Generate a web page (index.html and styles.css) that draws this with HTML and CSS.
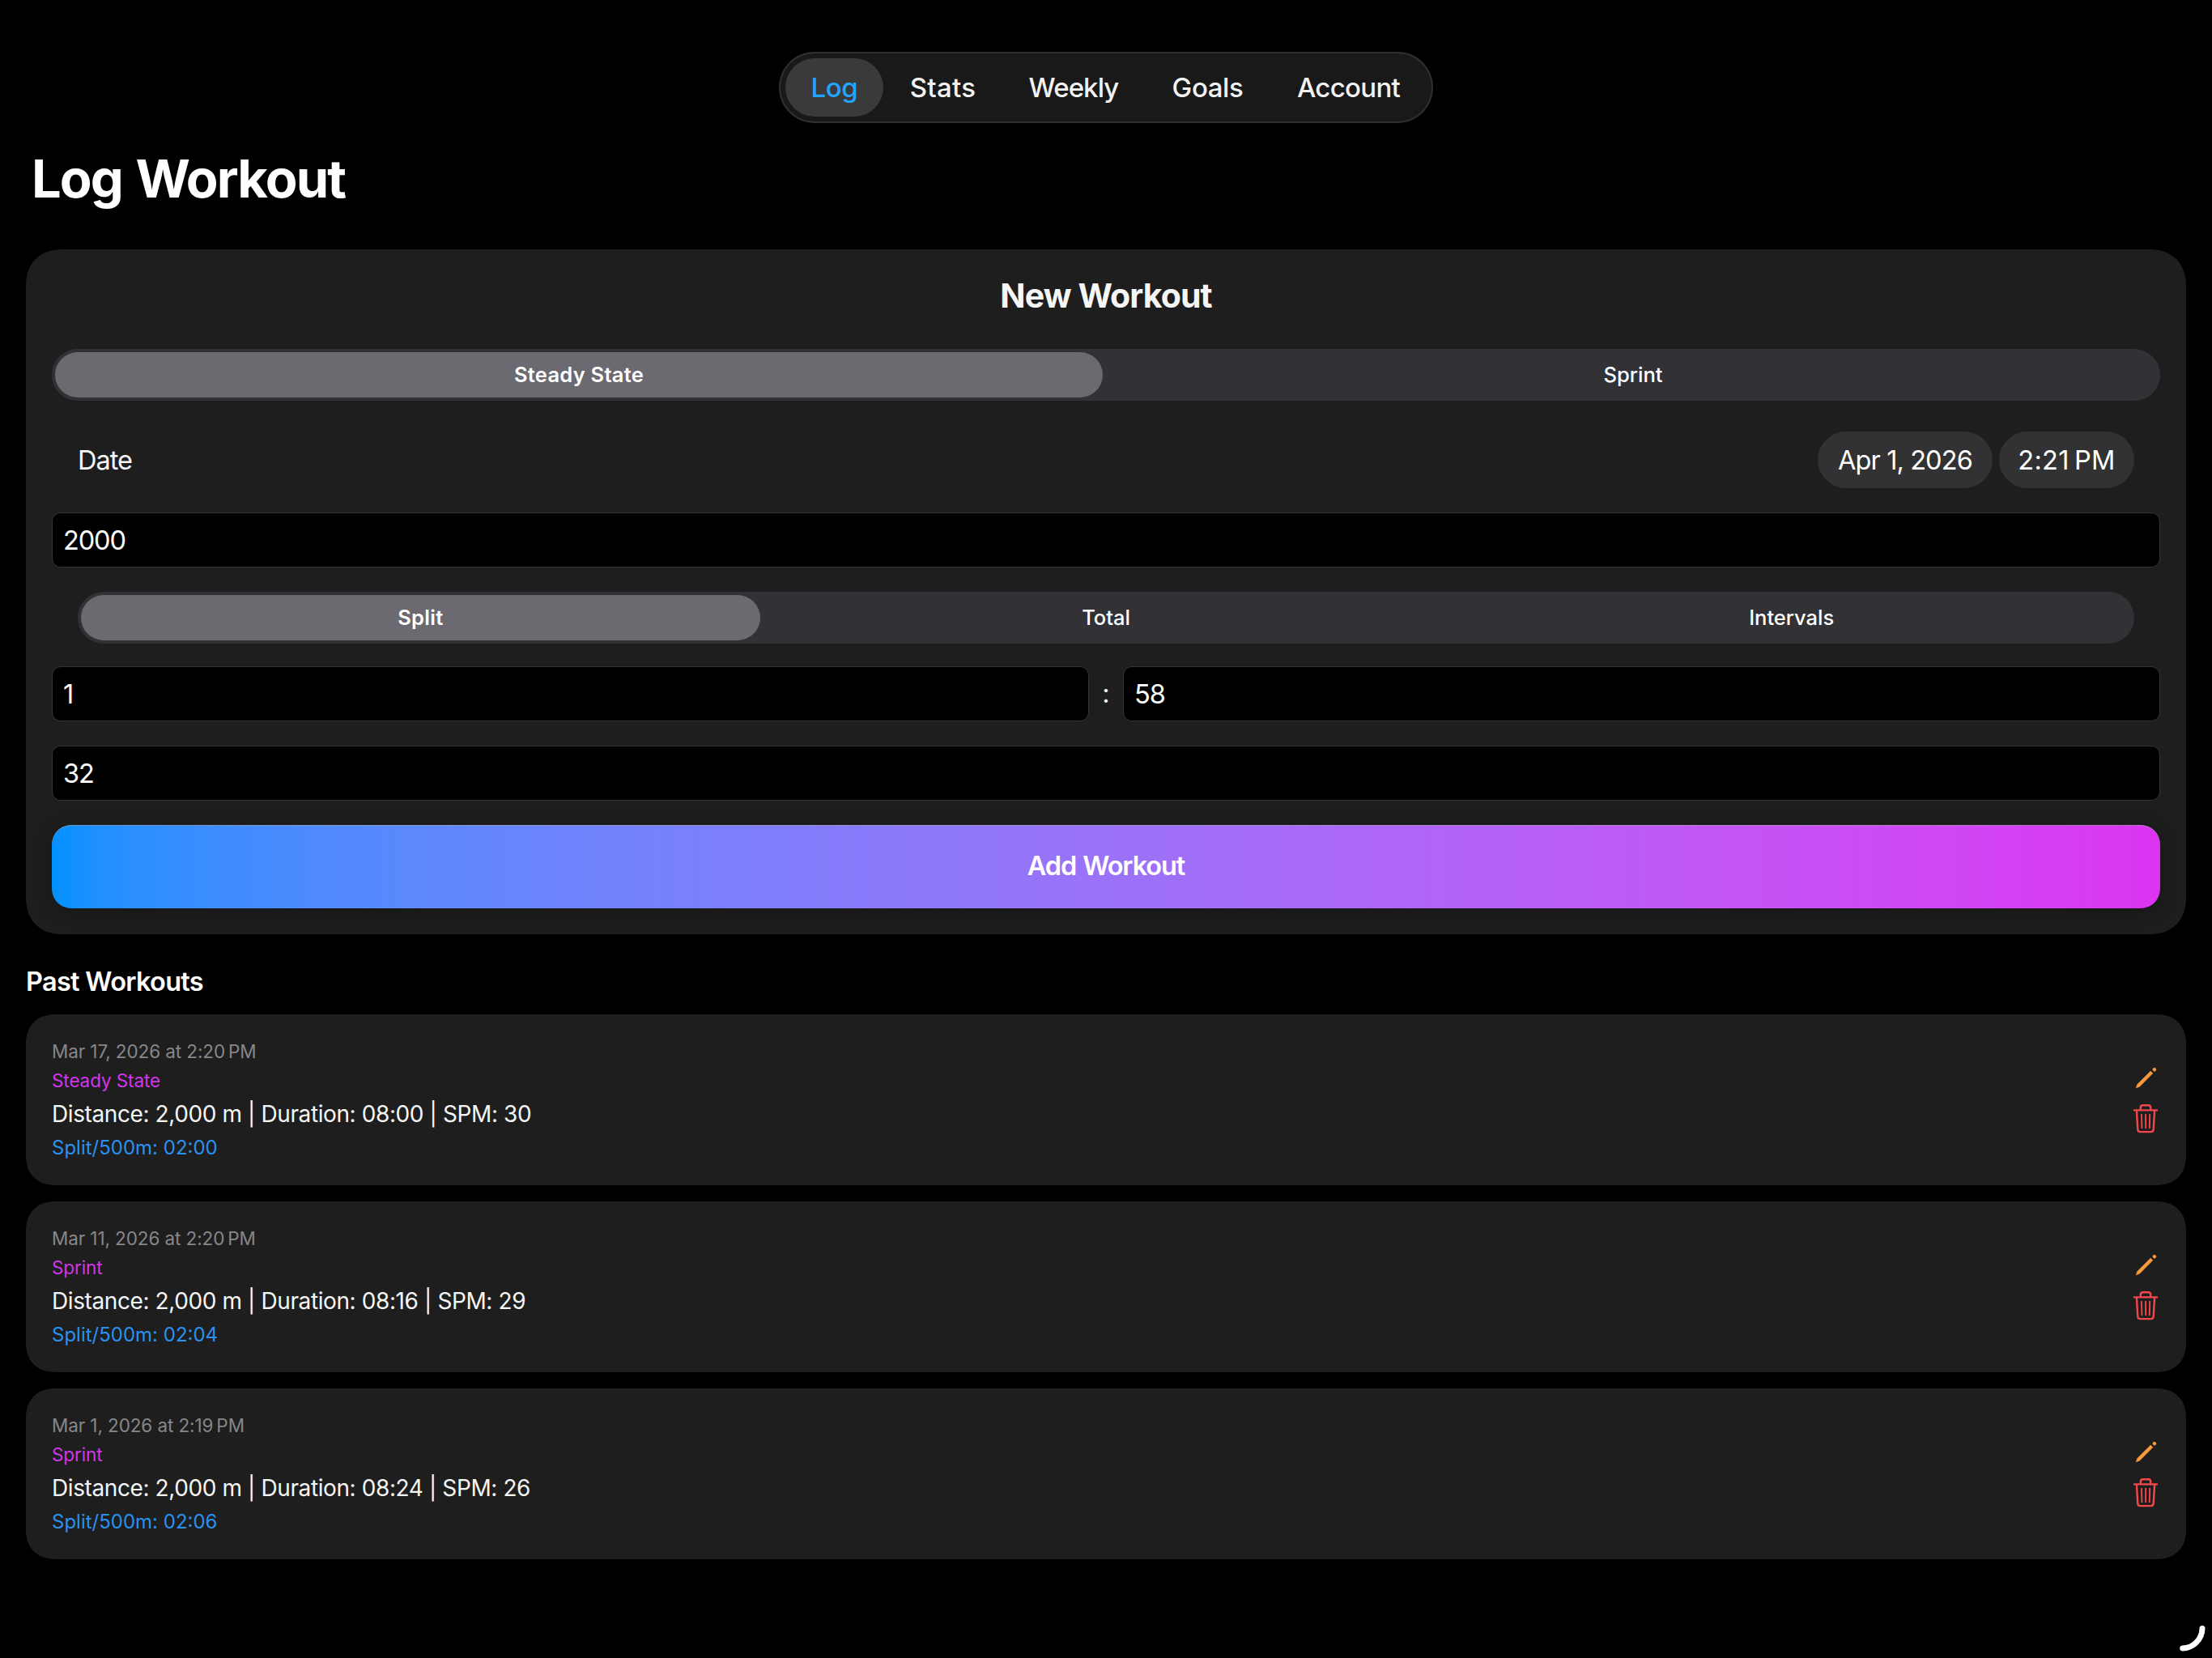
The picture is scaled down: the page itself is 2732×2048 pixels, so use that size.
FILE: index.html
```html
<!DOCTYPE html>
<html lang="en">
<head>
<meta charset="utf-8">
<title>Log Workout</title>
<link rel="stylesheet" href="styles.css">
</head>
<body>
<svg class="sprite" aria-hidden="true">
  <symbol id="pencil" viewBox="0 0 36 36">
    <path fill="currentColor" d="M6.200 30.900l1.500-4.500L24.200 10.100l2.700 2.700L10.600 29.200z" stroke="currentColor" stroke-width=".5" stroke-linejoin="round"/>
    <rect fill="currentColor" x="26.800" y="6" width="4.400" height="4.200" rx="1.700" transform="rotate(45 29 8)"/>
  </symbol>
  <symbol id="trash" viewBox="0 0 36 40">
    <g fill="none" stroke="currentColor" stroke-linecap="round" stroke-linejoin="round">
      <path stroke-width="2.400" d="M4 10.400h28M11.800 10V7.200q0-3 3-3h6.400q3 0 3 3V10M6.900 10.600l1.400 23.600q.2 2.900 3 2.900h13.400q2.800 0 3-2.900l1.400-23.600"/>
      <path stroke-width="1.900" d="M13 15.600l.4 16.600M18.100 15.600v16.600M23.200 15.600l-.4 16.600"/>
    </g>
  </symbol>
</svg>

<nav class="tabs">
  <a class="tab tab-log active">Log</a>
  <a class="tab tab-stats">Stats</a>
  <a class="tab tab-weekly">Weekly</a>
  <a class="tab tab-goals">Goals</a>
  <a class="tab tab-account">Account</a>
</nav>

<main class="page">
  <h1 class="title">Log Workout</h1>

  <section class="card form">
    <h2 class="form-title">New Workout</h2>
    <div class="segmented kind">
      <div class="segment selected">Steady State</div>
      <div class="segment">Sprint</div>
    </div>
    <div class="date-row">
      <span class="date-label">Date</span>
      <div class="pickers">
        <span class="picker day">Apr 1, 2026</span>
        <span class="picker time">2:21&#8201;PM</span>
      </div>
    </div>
    <div class="field distance">2000</div>
    <div class="segmented mode">
      <div class="segment selected">Split</div>
      <div class="segment">Total</div>
      <div class="segment">Intervals</div>
    </div>
    <div class="split-row">
      <div class="field">1</div>
      <span class="colon">:</span>
      <div class="field">58</div>
    </div>
    <div class="field rate">32</div>
    <div class="add">Add Workout</div>
  </section>

  <h2 class="past-title">Past Workouts</h2>
  <div class="history">
    <article class="card entry">
      <div class="details">
        <p class="when">Mar 17, 2026 at 2:20&#8201;PM</p>
        <p class="type">Steady State</p>
        <p class="summary">Distance: 2,000 m | Duration: 08:00 | SPM: 30</p>
        <p class="pace">Split/500m: 02:00</p>
      </div>
      <div class="actions">
        <svg class="pencil"><use href="#pencil"/></svg>
        <svg class="trash"><use href="#trash"/></svg>
      </div>
    </article>
    <article class="card entry">
      <div class="details">
        <p class="when">Mar 11, 2026 at 2:20&#8201;PM</p>
        <p class="type">Sprint</p>
        <p class="summary">Distance: 2,000 m | Duration: 08:16 | SPM: 29</p>
        <p class="pace">Split/500m: 02:04</p>
      </div>
      <div class="actions">
        <svg class="pencil"><use href="#pencil"/></svg>
        <svg class="trash"><use href="#trash"/></svg>
      </div>
    </article>
    <article class="card entry">
      <div class="details">
        <p class="when">Mar 1, 2026 at 2:19&#8201;PM</p>
        <p class="type">Sprint</p>
        <p class="summary">Distance: 2,000 m | Duration: 08:24 | SPM: 26</p>
        <p class="pace">Split/500m: 02:06</p>
      </div>
      <div class="actions">
        <svg class="pencil"><use href="#pencil"/></svg>
        <svg class="trash"><use href="#trash"/></svg>
      </div>
    </article>
  </div>
</main>

<svg class="corner-arc" viewBox="0 0 40 40" aria-hidden="true">
  <path d="M28 3.500A25 25 0 0 1 3.700 28" fill="none" stroke="#fff" stroke-width="7" stroke-linecap="round"/>
</svg>
</body>
</html>
```
FILE: styles.css
```css
* { box-sizing: border-box; }

body {
  margin: 0;
  height: 2048px;
  overflow: hidden;
  background: #000;
  color: #fff;
  font-family: Inter, "Liberation Sans", sans-serif;
  display: flow-root;
}

h1, h2, p { margin: 0; }

.sprite { display: none; }

/* Top tab bar */
.tabs {
  display: flex;
  width: 808px;
  height: 88px;
  margin: 64px auto 0;
  padding: 8px;
  border-radius: 44px;
  background: #191919;
  box-shadow: inset 0 0 0 2px #2f2f2f;
}

.tab {
  display: flex;
  align-items: center;
  justify-content: center;
  border-radius: 36px;
  font-size: 33px;
  font-weight: 500;
  letter-spacing: -0.4px;
  color: #f2f2f2;
}

.tab-log { width: 121px; }
.tab-stats { width: 147px; letter-spacing: 0.3px; }
.tab-weekly { width: 176px; letter-spacing: -0.9px; }
.tab-goals { width: 155px; }
.tab-account { width: 193px; letter-spacing: -0.7px; }
.tab.active { background: #3a3a3a; color: #22a4ff; }

/* Page */
.page { padding: 0 32px; }

.title {
  margin: 29px 0 47px 7px;
  line-height: 80px;
  font-size: 65px;
  font-weight: 700;
  letter-spacing: -1.9px;
  word-spacing: 3px;
}

.card {
  background: #1e1e1e;
  border-radius: 46px;
  corner-shape: superellipse(1.2);
}

.form {
  display: flex;
  flex-direction: column;
  padding: 32px;
}

.form-title {
  text-align: center;
  line-height: 50px;
  font-size: 41px;
  font-weight: 700;
  letter-spacing: -0.9px;
  color: #f6f6f6;
}

/* Segmented controls */
.segmented {
  display: flex;
  gap: 8px;
  height: 64px;
  padding: 4px;
  border-radius: 32px;
  background: #323136;
}

.segment {
  flex: 1;
  display: flex;
  align-items: center;
  justify-content: center;
  padding-bottom: 1px;
  border-radius: 28px;
  font-size: 25.5px;
  font-weight: 500;
}

.segment.selected {
  background: #6b6a70;
  font-weight: 560;
  letter-spacing: 0.25px;
}

.kind { margin-top: 41px; }
.mode { margin: 30px 32px 28px; }

/* Date row */
.date-row {
  display: flex;
  justify-content: space-between;
  align-items: center;
  height: 70px;
  margin: 38px 32px 30px;
  font-size: 32.5px;
}

.date-label { letter-spacing: -1px; color: #f6f6f6; }

.pickers { display: flex; gap: 8px; }

.picker {
  display: flex;
  align-items: center;
  justify-content: center;
  height: 70px;
  border-radius: 35px;
  background: #323235;
}

.day { width: 216px; letter-spacing: -0.9px; }
.time { width: 167px; letter-spacing: 0.3px; }

/* Text fields */
.field {
  flex: 1;
  height: 68px;
  padding-left: 13px;
  border: 1px solid #343434;
  border-radius: 11px;
  background: #000;
  line-height: 67px;
  font-size: 32.5px;
  letter-spacing: -1.1px;
}

.distance, .rate { flex: none; }

.split-row { display: flex; margin-bottom: 30px; }

.colon {
  width: 42px;
  text-align: center;
  line-height: 68px;
  font-size: 32.5px;
  color: #f6f6f6;
}

.add {
  height: 103px;
  margin-top: 30px;
  border-radius: 27px;
  corner-shape: superellipse(1.2);
  background: linear-gradient(to right in oklab, #0091ff, #db34f2);
  box-shadow: 0 4px 24px rgba(0, 0, 0, 0.3), inset 0 1px 0 rgba(160, 160, 160, 0.6);
  text-align: center;
  line-height: 102px;
  font-size: 32.5px;
  font-weight: 600;
  letter-spacing: -1.1px;
  word-spacing: 1px;
}

/* History */
.past-title {
  margin: 39px 0 20px;
  line-height: 40px;
  font-size: 32.5px;
  font-weight: 600;
  letter-spacing: -0.7px;
}

.history {
  display: flex;
  flex-direction: column;
  gap: 20px;
}

.entry {
  display: flex;
  justify-content: space-between;
  height: 211px;
  padding: 32px 32px 31px;
  border-radius: 37px;
}

.when, .type {
  line-height: 27px;
  font-size: 22.5px;
  letter-spacing: -0.1px;
}

.when { color: #87878a; }
.type { margin-top: 9px; color: #d336ea; }

.summary {
  margin-top: 11px;
  line-height: 34px;
  font-size: 28px;
  letter-spacing: -0.4px;
  color: #f6f6f6;
}

.pace {
  margin-top: 10px;
  line-height: 30px;
  font-size: 24px;
  color: #2a91f0;
}

.actions {
  display: flex;
  flex-direction: column;
  gap: 12px;
  padding-top: 28px;
}

.actions svg { display: block; width: 36px; }
.pencil { height: 36px; color: #f99a3c; }
.trash { height: 40px; color: #f2484c; }

/* Arc over the bottom-right screen corner */
.corner-arc {
  position: absolute;
  right: 0;
  bottom: 0;
  width: 40px;
  height: 40px;
}
```
